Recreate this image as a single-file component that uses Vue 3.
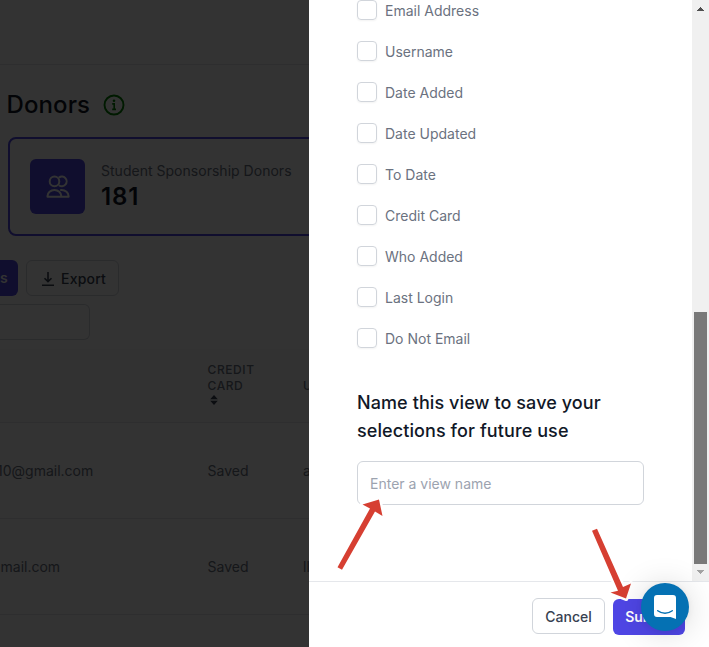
<script setup>
const fields = ['Email Address', 'Username', 'Date Added', 'Date Updated', 'To Date', 'Credit Card', 'Who Added', 'Last Login', 'Do Not Email']
const rows = [
  { email: '10@gmail.com', card: 'Saved', user: 'a', shift: 'a' },
  { email: 'mail.com', card: 'Saved', user: 'll', shift: 'b' },
]
</script>

<template>
  <div class="screen">
    <main class="page">
      <header class="topbar"></header>
      <div class="title-row">
        <h1>Donors</h1>
        <svg class="info" viewBox="0 0 22 22" fill="none" stroke="currentColor">
          <circle cx="11" cy="11" r="9.5" stroke-width="1.9" />
          <circle cx="11" cy="6.7" r="1.3" fill="currentColor" stroke="none" />
          <path d="M9.2 9.9h2v5.4M9.2 15.4h3.8" stroke-width="1.6" />
        </svg>
      </div>
      <section class="stat">
        <div class="stat-icon">
          <svg viewBox="0 0 26 26" fill="none" stroke="currentColor" stroke-width="2" stroke-linejoin="round">
            <circle cx="9.5" cy="7.4" r="4.8" />
            <path d="M13.9 3.6A4.8 4.8 0 1 1 13.9 11.2" />
            <path d="M2.5 22.8v-.8a6.9 6.1 0 0 1 13.8 0v.8zM15.2 15.9h1.4a7 6.1 0 0 1 7 6.1v.8h-7" />
          </svg>
        </div>
        <div>
          <div class="stat-label">Student Sponsorship Donors</div>
          <div class="stat-value">181</div>
        </div>
      </section>
      <div class="tools">
        <button class="primary-cut">s</button>
        <button class="export">
          <svg viewBox="0 0 14 16" fill="none" stroke="currentColor" stroke-width="1.6">
            <path d="M7 1v9.4M3.5 7.2L7 10.6l3.5-3.4M1 14.2h12" />
          </svg>
          Export
        </button>
      </div>
      <div class="search"></div>
      <div class="thead">
        <div></div>
        <div class="th-card">
          CREDIT<br />CARD
          <svg viewBox="0 0 8 10" fill="currentColor"><path d="M4 0l3.8 4.2H.2zM4 10L.2 5.8h7.6z" /></svg>
        </div>
        <div>U</div>
      </div>
      <div v-for="r in rows" :key="r.email" class="trow">
        <div class="email" :class="r.shift">{{ r.email }}</div>
        <div>{{ r.card }}</div>
        <div>{{ r.user }}</div>
      </div>
      <div class="shade"></div>
    </main>

    <aside class="drawer">
      <div class="scroll-area">
        <div class="content">
          <label v-for="f in fields" :key="f" class="option"><span class="box"></span><span class="name">{{ f }}</span></label>
          <h2>Name this view to save your selections for future use</h2>
          <input type="text" placeholder="Enter a view name" />
        </div>
        <div class="scrollbar">
          <svg class="arr" viewBox="0 0 7 4" fill="#505050" shape-rendering="crispEdges"><path d="M3 0h1v1h1v1h1v1h1v1H0V3h1V2h1V1h1z" /></svg>
          <div class="thumb"></div>
          <svg class="arr" viewBox="0 0 7 4" fill="#a3a3a3" shape-rendering="crispEdges"><path d="M0 0h7v1H6v1H5v1H4v1H3V3H2V2H1V1H0z" /></svg>
        </div>
      </div>
      <footer>
        <button class="cancel">Cancel</button>
        <button class="submit">Submit</button>
      </footer>
    </aside>

    <svg class="arrows" viewBox="0 0 709 647">
      <g fill="#d63f32" stroke="#fff" stroke-width="5" paint-order="stroke" stroke-linejoin="round">
        <path d="M337.5 567.2L370 508.5L362.5 504.5L379 499.5L382.5 516L375 511.5L342 569.8Z" />
        <path d="M592 530.8L618 590.8L610.5 592.5L626 598.5L631 583.5L623 587L597 528.8Z" />
      </g>
    </svg>
    <button class="chat">
      <svg viewBox="0 0 22 24">
        <path d="M3 0h16a3 3 0 0 1 3 3v21l-5.5-2H3a3 3 0 0 1-3-3V3a3 3 0 0 1 3-3z" fill="#fff" />
        <path d="M3.7 15.7q7.3 5.2 14.6 0" fill="none" stroke="#0571b3" stroke-width="1.4" stroke-linecap="round" />
      </svg>
    </button>
  </div>
</template>

<style>
body { margin: 0; }
</style>

<style scoped>
* { box-sizing: border-box; }
.screen { position: relative; display: flex; width: 709px; height: 647px; overflow: hidden; font-family: Inter, sans-serif; font-size: 14px; line-height: 20px; background: #fff; }
h1, h2 { margin: 0; }
button { font: inherit; margin: 0; padding: 0; }
.page { position: relative; width: 309px; overflow: hidden; flex: none; color: #6b7280; }
.shade { position: absolute; inset: 0; background: rgba(0, 0, 0, .8); }
.topbar { height: 65px; border-bottom: 1px solid #e5e7eb; }
.title-row { display: flex; align-items: center; gap: 14px; height: 72px; padding: 8px 0 0 6.5px; }
h1 { font-size: 24px; line-height: 32px; font-weight: 500; color: #111827; letter-spacing: .1px; }
.info { width: 22px; height: 22px; margin-left: -.6px; color: green; }
.stat { display: flex; align-items: center; gap: 16px; width: 330px; height: 99px; margin-left: 8px; padding-left: 20px; border: 2px solid #4f46e5; border-radius: 8px; }
.stat-icon { display: grid; place-items: center; width: 55px; height: 55px; background: #4f46e5; border-radius: 6px; color: #fff; }
.stat-icon svg { width: 26px; height: 26px; }
.stat-label { font-size: 14px; line-height: 20px; white-space: nowrap; letter-spacing: .02px; }
.stat-value { font-size: 24px; line-height: 32px; font-weight: 600; color: #111827; letter-spacing: .9px; }
.tools { display: flex; gap: 8px; margin-top: 24px; }
.primary-cut { width: 18px; height: 36px; padding: 0 12px 0 0; border: 0; border-radius: 0 6px 6px 0; background: #4f46e5; color: #fff; font-weight: 600; text-align: right; }
.export { display: flex; align-items: center; justify-content: center; gap: 6px; width: 93px; height: 36px; padding: 2px 0 0 2px; border: 1px solid #d1d5db; border-radius: 6px; background: #fff; color: #374151; font-weight: 500; letter-spacing: .2px; }
.export svg { width: 14px; height: 16px; }
.search { width: 90px; height: 36px; margin-top: 8px; border: 1px solid #d1d5db; border-left: 0; border-radius: 0 6px 6px 0; }
.thead, .trow { display: grid; grid-template-columns: 207.5px 95.5px 40px; align-items: center; border-bottom: 1px solid #e5e7eb; }
.thead { height: 74px; margin-top: 9px; font-size: 12px; line-height: 16px; letter-spacing: .6px; font-weight: 500; background: #f9fafb; }
.th-card { padding-bottom: 5px; }
.th-card svg { display: block; width: 8px; height: 10px; margin: 1px 0 0 2px; color: #374151; }
.trow { height: 96px; }
.email { white-space: nowrap; }
.email.a { margin-left: -3px; }
.email.b { margin-left: .5px; }
.drawer { display: flex; flex-direction: column; width: 400px; height: 647px; background: #fff; }
.scroll-area { display: flex; justify-content: space-between; height: 581px; }
.content { width: 335px; padding-left: 48px; }
.option { display: flex; align-items: center; gap: 8px; height: 20px; margin-bottom: 21px; color: #6b7280; }
.name { padding-top: 2px; }
.box { width: 20px; height: 20px; border: 1px solid #d1d5db; border-radius: 4px; box-shadow: 0 1px 2px rgba(0, 0, 0, .05); }
h2 { margin-top: 41px; width: 270px; font-size: 18px; line-height: 28px; font-weight: 500; color: #111827; letter-spacing: .09px; }
input { display: block; width: 287px; height: 44px; margin-top: 16px; padding: 1px 12px 0; border: 1px solid #d1d5db; border-radius: 6px; font: inherit; outline: 0; }
input::placeholder { color: #9ca3af; opacity: 1; }
.scrollbar { display: flex; flex-direction: column; align-items: center; justify-content: space-between; width: 17px; padding: 7px 0; background: #f0f0f0; }
.arr { width: 7px; height: 4px; }
.thumb { width: 13px; height: 252px; margin-top: 294px; background: #797979; }
footer { display: flex; justify-content: flex-end; gap: 8px; height: 66px; padding: 16px 24px 0; border-top: 1px solid #e5e7eb; }
.cancel, .submit { width: 73px; height: 36px; padding-top: 2px; border: 1px solid #d1d5db; border-radius: 6px; background: #fff; color: #374151; font-weight: 500; }
.submit { width: 72px; margin-top: 1px; padding: 0; border: 0; background: #4f46e5; color: #fff; font-weight: 600; }
.arrows { position: absolute; inset: 0; width: 709px; height: 647px; pointer-events: none; }
.chat { position: absolute; left: 641px; top: 583px; display: grid; place-items: center; width: 48px; height: 48px; border: 0; border-radius: 50%; background: #0571b3; box-shadow: 0 1px 6px rgba(0, 0, 0, .06), 0 2px 32px rgba(0, 0, 0, .16); }
.chat svg { width: 22px; height: 24px; }
</style>
